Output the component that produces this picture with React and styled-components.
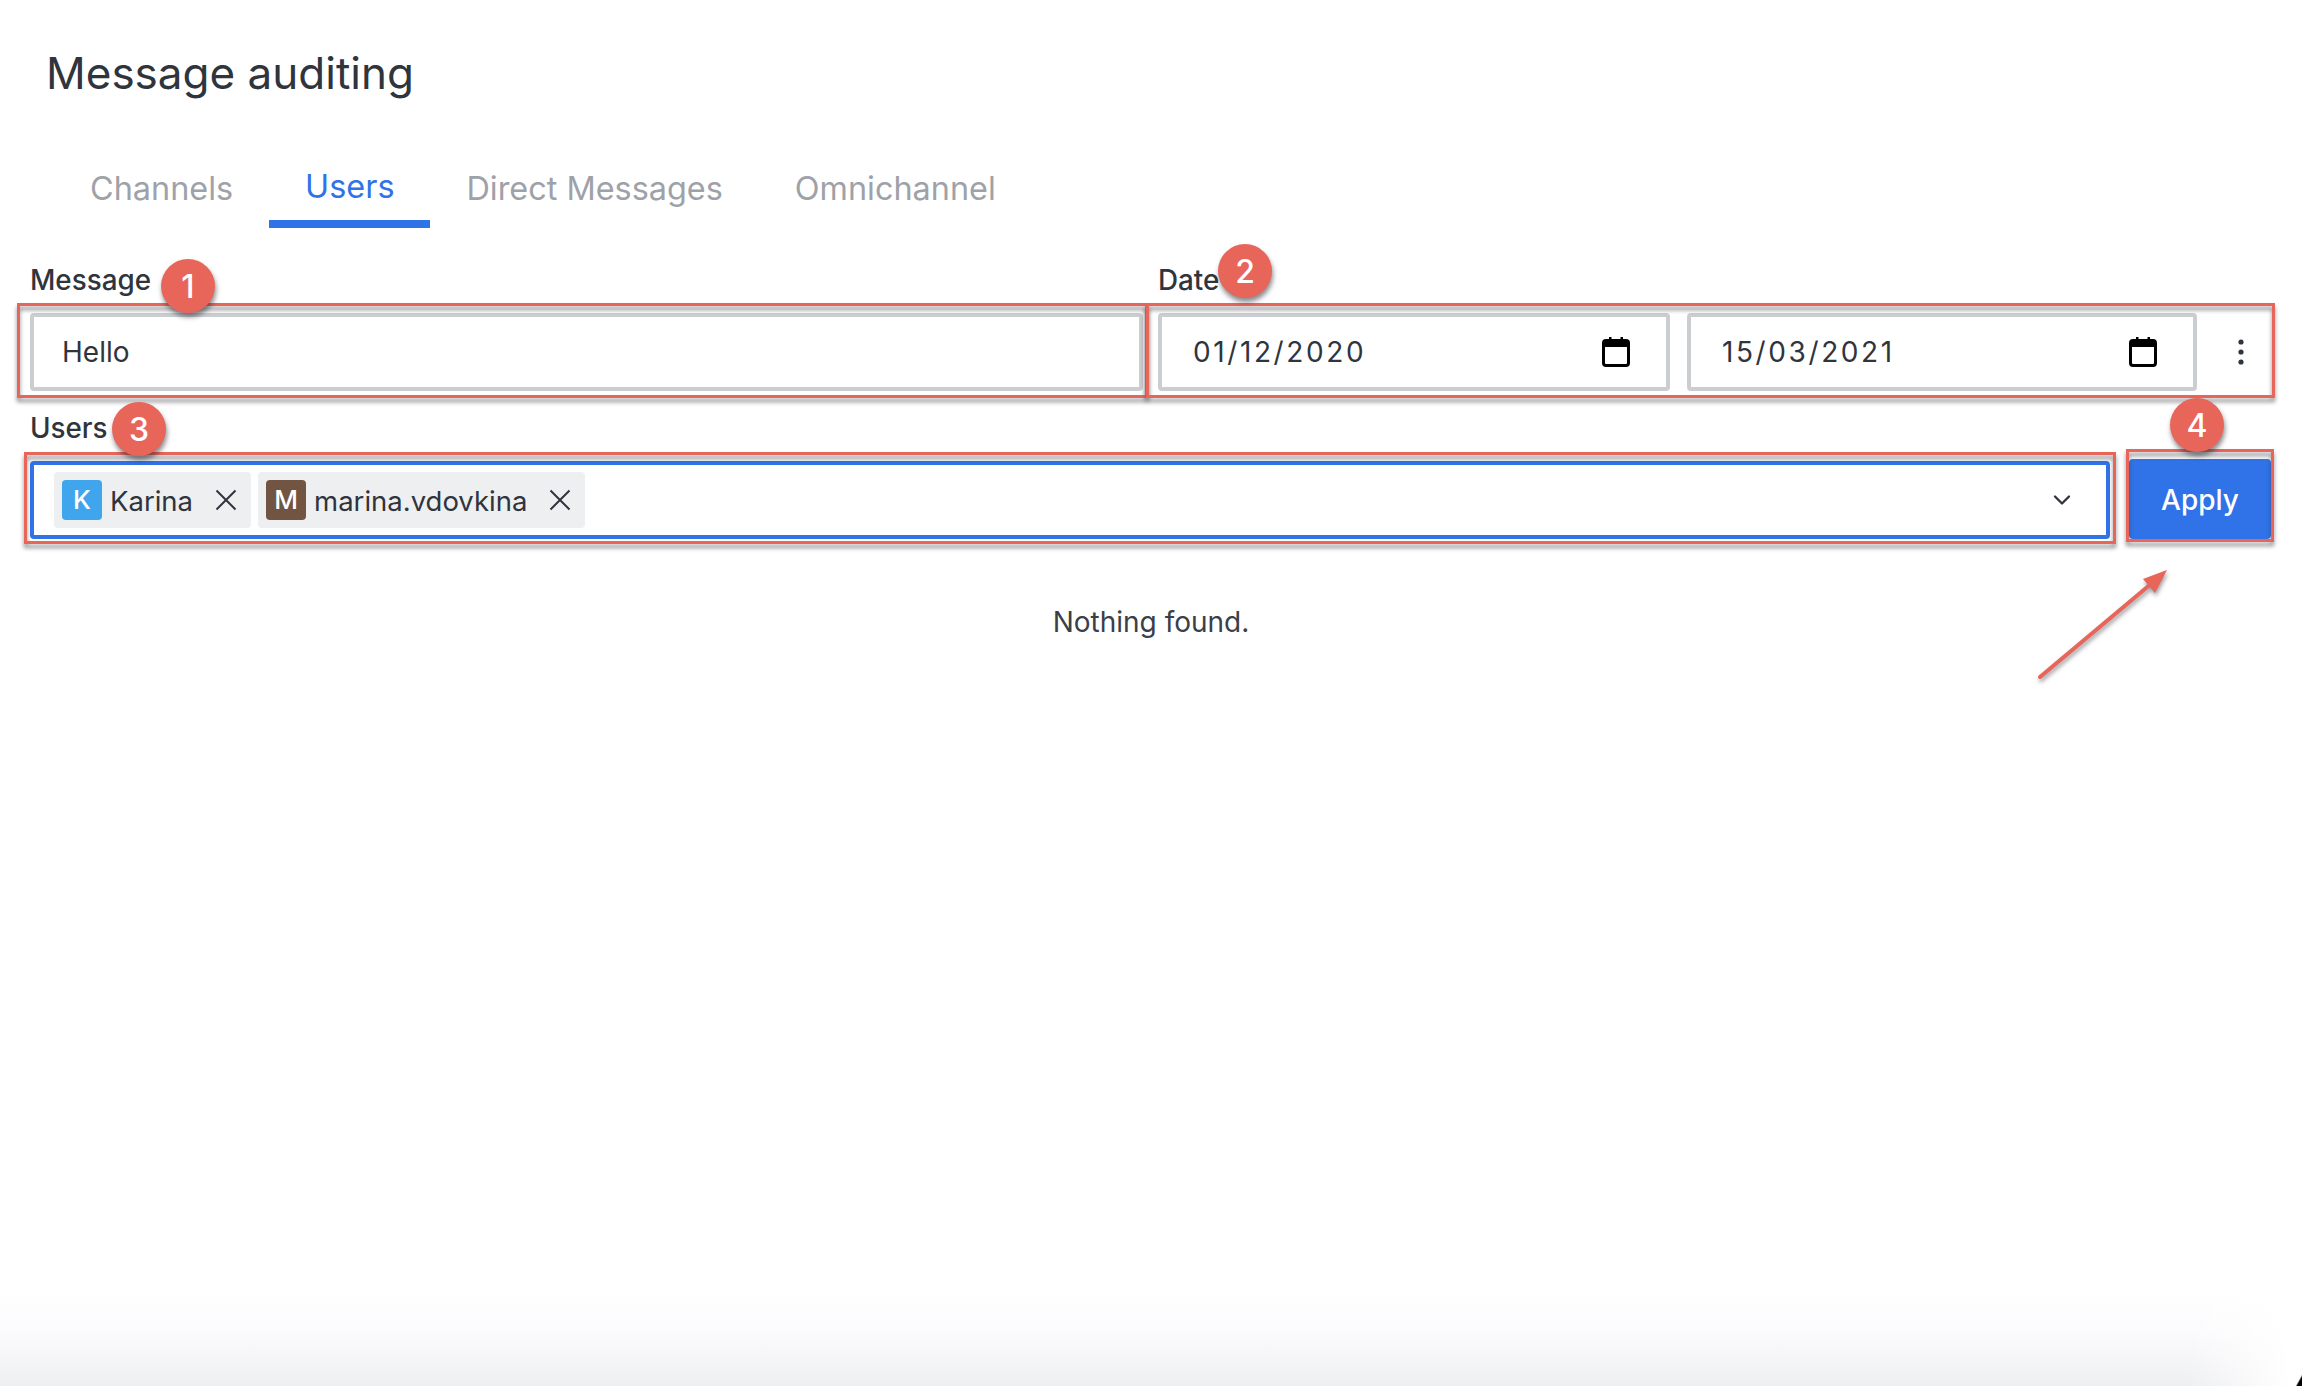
import React from "react";
import styled, { createGlobalStyle } from "styled-components";
import { ChevronDown } from "lucide-react";

const GlobalStyle = createGlobalStyle`
  html, body {
    margin: 0;
    padding: 0;
    background: #fff;
  }
  body {
    font-family: Inter, "Liberation Sans", sans-serif;
    color: #2f343d;
  }
  * {
    box-sizing: border-box;
  }
`;

const Page = styled.div`
  position: relative;
  min-height: 100vh;
  display: flex;
  flex-direction: column;
  overflow: hidden;
`;

const Title = styled.h1`
  margin: 0;
  padding: 46px 0 0 46px;
  height: 146px;
  font-size: 44px;
  line-height: 54px;
  font-weight: 400;
  color: #2f343d;
`;

const Tabs = styled.nav`
  display: flex;
  padding-left: 54px;
  height: 82px;
`;

const Tab = styled.div`
  padding: ${(props) => (props.$active ? "21px 36px 0" : "23px 36px 0")};
  height: 82px;
  font-size: 32.4px;
  line-height: 40px;
  color: ${(props) => (props.$active ? "#3072e8" : "#9ea2a8")};
  border-bottom: 8px solid ${(props) => (props.$active ? "#3072e8" : "transparent")};
`;

const Form = styled.div`
  padding: 34px 30px 0;
  display: flex;
  flex-direction: column;
  gap: 19px;
`;

const FieldRow = styled.div`
  display: grid;
  grid-template-columns: ${(props) => props.$columns};
  gap: ${(props) => props.$gap};
  align-items: end;
`;

const Field = styled.div`
  position: relative;
`;

const Label = styled.div`
  height: 36px;
  margin-bottom: 15px;
  font-size: 27.8px;
  line-height: 36px;
  font-weight: 500;
  color: #2f343d;
`;

const Controls = styled.div`
  position: relative;
  display: flex;
  align-items: center;
  gap: 17px;
`;

const Box = styled.div`
  flex: ${(props) => (props.$width ? `0 0 ${props.$width}` : "1")};
  height: 78px;
  display: flex;
  align-items: center;
  justify-content: space-between;
  padding: 0 ${(props) => props.$padRight || "28px"} 0 28px;
  background: #fff;
  border: 4px solid ${(props) => (props.$focused ? "#3072e8" : "#cbced1")};
  border-radius: 4px;
  font-size: 28px;
  line-height: 36px;
  color: #2f343d;
`;

const DateText = styled.span`
  margin-left: 3px;
  letter-spacing: 2.6px;
`;

const KebabButton = styled.div`
  flex: 1;
  display: flex;
  justify-content: center;
  padding-right: 4px;
`;

const Chips = styled.div`
  display: flex;
  gap: 7px;
  margin-left: -8px;
`;

const Chip = styled.div`
  height: 56px;
  display: flex;
  align-items: center;
  padding: 0 14px 0 8px;
  background: #eeeff1;
  border-radius: 4px;
  font-size: 27.5px;
  color: #2f343d;
`;

const Avatar = styled.div`
  width: 40px;
  height: 40px;
  margin-right: 8px;
  display: flex;
  align-items: center;
  justify-content: center;
  border-radius: 4px;
  background: ${(props) => props.$color};
  color: #fff;
  font-size: 26px;
  font-weight: 500;
`;

const ChipName = styled.span`
  margin-right: 22px;
  padding-top: 1px;
`;

const ApplyButton = styled.button`
  width: 100%;
  height: 80px;
  padding: 2px 0 0;
  border: none;
  border-radius: 4px;
  background: #3072e8;
  color: #fff;
  font: 500 28px/36px Inter, "Liberation Sans", sans-serif;
`;

const Nothing = styled.div`
  margin-top: 63px;
  text-align: center;
  font-size: 28px;
  line-height: 40px;
  color: #3a3f49;
`;

const BottomFade = styled.div`
  position: relative;
  margin-top: auto;
  height: 100px;
  background:
    linear-gradient(to right, rgba(255, 255, 255, 0) 95%, #fff 99.5%),
    linear-gradient(to bottom, #fff 0%, #fbfbfd 45%, #f6f6f8 70%, #eeeff1 100%);

  &::after {
    content: "";
    position: absolute;
    right: 0;
    bottom: 0;
    width: 6px;
    height: 11px;
    background: linear-gradient(to bottom right, transparent 45%, #000 60%);
  }
`;

// annotation layers over the form
const Frame = styled.div`
  position: absolute;
  top: ${(props) => props.$top}px;
  right: ${(props) => props.$right}px;
  bottom: ${(props) => props.$bottom}px;
  left: ${(props) => props.$left}px;
  border: 3px solid #e8655a;
  filter: drop-shadow(0 4px 2px rgba(60, 60, 70, 0.6));
  pointer-events: none;
`;

const Badge = styled.div`
  position: absolute;
  top: ${(props) => props.$top}px;
  left: ${(props) => props.$left}px;
  width: 54px;
  height: 54px;
  display: flex;
  align-items: center;
  justify-content: center;
  border-radius: 50%;
  background: #e8655a;
  box-shadow: 1px 4px 5px rgba(40, 40, 50, 0.55);
  color: #fff;
  font-size: 32px;
  font-weight: 500;
  z-index: 2;
`;

const Arrow = styled.svg`
  position: absolute;
  left: 2030px;
  top: 560px;
  filter: drop-shadow(1px 3px 2px rgba(60, 60, 70, 0.5));
`;

function CalendarIcon() {
  return (
    <svg width="28" height="30" viewBox="0 0 28 30">
      <path d="M7 0h2.5v4H7zM18.5 0H21v4h-2.5z" fill="#000" />
      <rect x="1.5" y="3.5" width="25" height="25" rx="2.5" fill="none" stroke="#000" strokeWidth="3" />
      <rect x="1" y="3" width="26" height="7" fill="#000" />
    </svg>
  );
}

function KebabIcon() {
  return (
    <svg width="6" height="26" viewBox="0 0 6 26">
      <circle cx="3" cy="3" r="2.6" fill="#2f343d" />
      <circle cx="3" cy="13" r="2.6" fill="#2f343d" />
      <circle cx="3" cy="23" r="2.6" fill="#2f343d" />
    </svg>
  );
}

function CloseIcon() {
  return (
    <svg width="22" height="22" viewBox="0 0 22 22">
      <path d="M1.5 1.5 L20.5 20.5 M20.5 1.5 L1.5 20.5" stroke="#2f343d" strokeWidth="2" fill="none" />
    </svg>
  );
}

function UserChip({ letter, color, name }) {
  return (
    <Chip>
      <Avatar $color={color}>{letter}</Avatar>
      <ChipName>{name}</ChipName>
      <CloseIcon />
    </Chip>
  );
}

export default function App() {
  return (
    <Page>
      <GlobalStyle />
      <Title>Message auditing</Title>
      <Tabs>
        <Tab>Channels</Tab>
        <Tab $active>Users</Tab>
        <Tab>Direct Messages</Tab>
        <Tab>Omnichannel</Tab>
      </Tabs>
      <Form>
        <FieldRow $columns="1113px 1114px" $gap="15px">
          <Field>
            <Label>Message</Label>
            <Box>Hello</Box>
            <Frame $top={41} $right={-5} $bottom={-7} $left={-13} />
            <Badge $top={-3} $left={131}>1</Badge>
          </Field>
          <Field>
            <Label>Date</Label>
            <Controls>
              <Box $width="512px" $padRight="36px">
                <DateText>01/12/2020</DateText>
                <CalendarIcon />
              </Box>
              <Box $width="510px" $padRight="36px">
                <DateText>15/03/2021</DateText>
                <CalendarIcon />
              </Box>
              <KebabButton>
                <KebabIcon />
              </KebabButton>
            </Controls>
            <Frame $top={41} $right={-3} $bottom={-7} $left={-12} />
            <Badge $top={-18} $left={60}>2</Badge>
          </Field>
        </FieldRow>
        <FieldRow $columns="2080px 142px" $gap="19px">
          <Field>
            <Label>Users</Label>
            <Box $focused $padRight="30px">
              <Chips>
                <UserChip letter="K" color="#3fa5ec" name="Karina" />
                <UserChip letter="M" color="#725442" name="marina.vdovkina" />
              </Chips>
              <ChevronDown size={28} strokeWidth={2} color="#2f343d" />
            </Box>
            <Frame $top={42} $right={-6} $bottom={-5} $left={-6} />
            <Badge $top={-8} $left={82}>3</Badge>
          </Field>
          <Field>
            <ApplyButton>Apply</ApplyButton>
            <Frame $top={-10} $right={-3} $bottom={-3} $left={-3} />
            <Badge $top={-61} $left={41}>4</Badge>
          </Field>
        </FieldRow>
      </Form>
      <Nothing>Nothing found.</Nothing>
      <BottomFade />
      <Arrow width="150" height="130" viewBox="0 0 150 130">
        <path d="M10 117 L128 18" stroke="#e8655a" strokeWidth="4" strokeLinecap="round" fill="none" />
        <path d="M137 10 L113 19 L125 33 Z" fill="#e8655a" />
      </Arrow>
    </Page>
  );
}
